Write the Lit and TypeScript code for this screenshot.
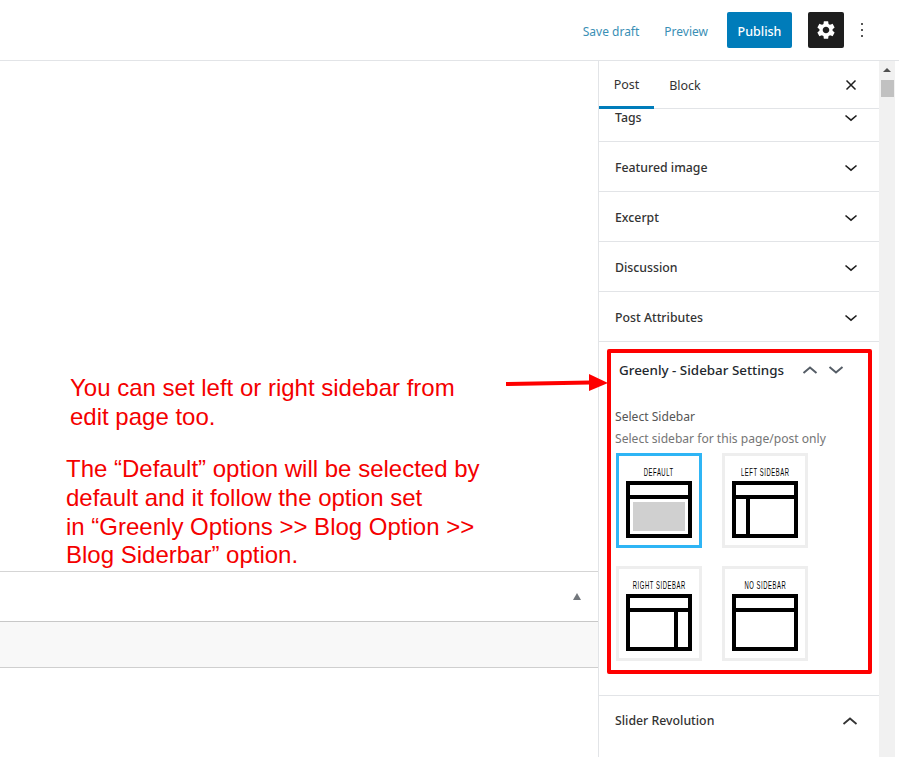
import { LitElement, html, css, svg } from "lit";
import { customElement } from "lit/decorators.js";

const chevronDown = html`<svg class="chev" viewBox="0 0 24 24" width="24" height="24"><path d="M6.5 9.5 12 14.2 17.5 9.5" fill="none" stroke="#1e1e1e" stroke-width="1.6"/></svg>`;
const chevronUp = html`<svg class="chev" viewBox="0 0 24 24" width="24" height="24"><path d="M5.5 15 12 9.5 18.5 15" fill="none" stroke="#333" stroke-width="1.8"/></svg>`;
const panelDown = html`<svg class="chev" viewBox="0 0 24 24" width="24" height="24"><path d="M5.5 9 12 14.5 18.5 9" fill="none" stroke="#555d66" stroke-width="2"/></svg>`;
const panelUp = html`<svg class="chev" viewBox="0 0 24 24" width="24" height="24"><path d="M5.5 15 12 9.5 18.5 15" fill="none" stroke="#555d66" stroke-width="2"/></svg>`;

const frame = (kind: string) => svg`
  <rect x="2" y="2" width="62" height="53" fill="none" stroke="#000" stroke-width="4"/>
  <path d="M0 16H66" stroke="#000" stroke-width="4"/>
  ${kind === "default" ? svg`<rect x="7" y="21" width="52" height="29" fill="#d0d0d0"/>` : ""}
  ${kind === "left" ? svg`<path d="M16 16V55" stroke="#000" stroke-width="4"/>` : ""}
  ${kind === "right" ? svg`<path d="M50 16V55" stroke="#000" stroke-width="4"/>` : ""}
`;

@customElement("app-root")
export class AppRoot extends LitElement {
  static styles = css`
    :host {
      display: block;
      position: relative;
      width: 899px;
      height: 757px;
      overflow: hidden;
      background: #fff;
      font-family: "Noto Sans", "Open Sans", sans-serif;
      font-size: 13px;
      color: #1e1e1e;
    }
    .top {
      height: 60px;
      border-bottom: 1px solid #e2e4e7;
      display: flex;
      align-items: center;
      justify-content: flex-end;
      padding-right: 35px;
    }
    .link { color: #3a8fb5; font-size: 12px; padding-top: 2px; }
    .save { margin-right: 25px; }
    .preview { margin-right: 19px; }
    .publish {
      width: 65px;
      height: 36px;
      background: #007cba;
      color: #fff;
      border-radius: 2px;
      display: flex;
      align-items: center;
      justify-content: center;
      font-weight: 500;
      font-size: 12.5px;
      margin-right: 16px;
      padding-top: 2px;
      box-sizing: border-box;
    }
    .gear {
      width: 36px;
      height: 36px;
      background: #1e1e1e;
      border-radius: 2px;
      display: flex;
      align-items: center;
      justify-content: center;
      margin-right: 16px;
    }
    .dots { width: 4px; display: flex; flex-direction: column; gap: 3.5px; align-items: center; }
    .dots i { width: 2.5px; height: 2.5px; background: #1e1e1e; border-radius: 50%; display: block; }
    .body {
      display: grid;
      grid-template-columns: 598px 281px 16px 4px;
      height: 696px;
    }
    .main { display: flex; flex-direction: column; }
    .editor { height: 510px; border-bottom: 1px solid #d5d5d5; }
    .meta {
      height: 49px;
      border-bottom: 1px solid #c8c8c8;
      display: flex;
      align-items: center;
      justify-content: flex-end;
      padding-right: 17px;
    }
    .tri { width: 0; height: 0; border-left: 4.5px solid transparent; border-right: 4.5px solid transparent; border-bottom: 7px solid #72777c; }
    .strip { height: 45px; background: #f8f8f8; border-bottom: 1px solid #cfcfcf; }
    .side { border-left: 1px solid #e2e4e7; display: flex; flex-direction: column; overflow: hidden; }
    .tabs {
      height: 47px;
      border-bottom: 1px solid #e2e4e7;
      display: flex;
      align-items: stretch;
      position: relative;
      flex: none;
    }
    .tab { display: flex; align-items: center; justify-content: center; font-size: 12.5px; color: #333; padding-top: 2px; box-sizing: border-box; }
    .tab.post { width: 55px; border-bottom: 3px solid #007cba; margin-bottom: -1px; }
    .tab.block { width: 62px; }
    .close { margin-left: auto; margin-right: 22px; display: flex; align-items: center; padding-top: 1px; }
    .row {
      height: 49px;
      flex: none;
      box-sizing: content-box;
      border-bottom: 1px solid #e2e4e7;
      display: flex;
      align-items: center;
      justify-content: space-between;
      padding: 0 20px 0 16px;
      font-weight: 500;
      font-size: 12.3px;
      color: #333;
    }
    .row > * { position: relative; top: 1px; }
    .row.tags { height: 32px; align-items: flex-start; line-height: 18px; }
    .row.tags > * { top: 0; }
    .row.tags .chev { margin-top: -3px; }
    .row.last { border-bottom: 0; padding-right: 21px; }
    .row.last > * { top: 0; }
    .chev { flex: none; margin-right: -4px; }
    .panel {
      height: 354px;
      flex: none;
      border-bottom: 1px solid #e2e4e7;
      padding: 19px 0 0 16px;
      box-sizing: border-box;
    }
    .panel-head {
      display: flex;
      align-items: center;
      height: 18px;
      padding-left: 4px;
      font-weight: 500;
      font-size: 13.4px;
      color: #23282d;
    }
    .panel-head .arrows { display: flex; margin-left: 14px; gap: 2px; }
    .panel-head .chev { margin-right: 0; }
    .field { margin-top: 27px; font-size: 12.1px; color: #555; line-height: 22px; }
    .hint { color: #757575; }
    .thumbs {
      display: grid;
      grid-template-columns: 86px 86px;
      grid-auto-rows: 95px;
      column-gap: 20px;
      row-gap: 18px;
      margin: 3px 0 0 1px;
    }
    .thumb {
      border: 3px solid #eeeeee;
      display: flex;
      flex-direction: column;
      align-items: center;
      padding-top: 11px;
      box-sizing: border-box;
    }
    .thumb.on { border-color: #2fb5f5; }
    .thumb span {
      font-family: "Liberation Sans", Arial, sans-serif;
      font-weight: 400;
      font-size: 10.5px;
      line-height: 10px;
      height: 14px;
      letter-spacing: 1px;
      color: #000;
      white-space: nowrap;
      transform: scaleX(0.56);
    }
    .scrollbar { background: #f1f1f1; display: flex; flex-direction: column; align-items: center; }
    .scrollbar .up {
      width: 0; height: 0; margin-top: 7px;
      border-left: 4px solid transparent; border-right: 4px solid transparent; border-bottom: 4px solid #505050;
    }
    .scrollbar .thumbbar { width: 13px; height: 17px; background: #c1c1c1; margin-top: 8px; }
    .redbox {
      position: absolute;
      left: 607px;
      top: 349px;
      width: 265px;
      height: 325px;
      box-sizing: border-box;
      border: 4px solid #fe0000;
      border-radius: 2px;
    }
    .arrow { position: absolute; left: 506px; top: 373px; }
    .note {
      position: absolute;
      color: #f40000;
      font-family: "Liberation Sans", Arial, sans-serif;
      font-size: 24px;
      line-height: 29px;
      white-space: nowrap;
    }
    .note.a { left: 70px; top: 373px; }
    .note.b { left: 66px; top: 455px; line-height: 28.8px; }
  `;

  private row(label: string) {
    return html`<div class="row"><span>${label}</span>${chevronDown}</div>`;
  }

  private thumb(label: string, kind: string) {
    return html`<div class="thumb ${kind === "default" ? "on" : ""}">
      <span>${label}</span>
      <svg width="66" height="57" viewBox="0 0 66 57">${frame(kind)}</svg>
    </div>`;
  }

  render() {
    return html`
      <div class="top">
        <span class="link save">Save draft</span>
        <span class="link preview">Preview</span>
        <div class="publish">Publish</div>
        <div class="gear">
          <svg width="22" height="22" viewBox="0 0 24 24"><path fill="#fff" d="M19.14 12.94c.04-.3.06-.61.06-.94 0-.32-.02-.64-.07-.94l2.03-1.58c.18-.14.23-.41.12-.61l-1.92-3.32c-.12-.22-.37-.29-.59-.22l-2.39.96c-.5-.38-1.03-.7-1.62-.94l-.36-2.54c-.04-.24-.24-.41-.48-.41h-3.84c-.24 0-.43.17-.47.41l-.36 2.54c-.59.24-1.13.57-1.62.94l-2.39-.96c-.22-.08-.47 0-.59.22L2.74 8.87c-.12.21-.08.47.12.61l2.03 1.58c-.05.3-.09.63-.09.94s.02.64.07.94l-2.03 1.58c-.18.14-.23.41-.12.61l1.92 3.32c.12.22.37.29.59.22l2.39-.96c.5.38 1.03.7 1.62.94l.36 2.54c.05.24.24.41.48.41h3.84c.24 0 .44-.17.47-.41l.36-2.54c.59-.24 1.13-.56 1.62-.94l2.39.96c.22.08.47 0 .59-.22l1.92-3.32c.12-.22.07-.47-.12-.61l-2.01-1.58zM12 15.6c-1.98 0-3.6-1.62-3.6-3.6s1.62-3.6 3.6-3.6 3.6 1.62 3.6 3.6-1.62 3.6-3.6 3.6z"/></svg>
        </div>
        <div class="dots"><i></i><i></i><i></i></div>
      </div>
      <div class="body">
        <div class="main">
          <div class="editor"></div>
          <div class="meta"><div class="tri"></div></div>
          <div class="strip"></div>
        </div>
        <div class="side">
          <div class="tabs">
            <div class="tab post">Post</div>
            <div class="tab block">Block</div>
            <div class="close">
              <svg width="12" height="12" viewBox="0 0 12 12"><path d="M1.5 1.5l9 9M10.5 1.5l-9 9" stroke="#1e1e1e" stroke-width="1.5" fill="none"/></svg>
            </div>
          </div>
          <div class="row tags"><span>Tags</span>${chevronDown}</div>
          ${this.row("Featured image")}
          ${this.row("Excerpt")}
          ${this.row("Discussion")}
          ${this.row("Post Attributes")}
          <div class="panel">
            <div class="panel-head">
              <span>Greenly - Sidebar Settings</span>
              <span class="arrows">${panelUp}${panelDown}</span>
            </div>
            <div class="field">
              <div>Select Sidebar</div>
              <div class="hint">Select sidebar for this page/post only</div>
            </div>
            <div class="thumbs">
              ${this.thumb("DEFAULT", "default")}
              ${this.thumb("LEFT SIDEBAR", "left")}
              ${this.thumb("RIGHT SIDEBAR", "right")}
              ${this.thumb("NO SIDEBAR", "none")}
            </div>
          </div>
          <div class="row last"><span>Slider Revolution</span>${chevronUp}</div>
        </div>
        <div class="scrollbar"><div class="up"></div><div class="thumbbar"></div></div>
        <div></div>
      </div>
      <div class="redbox"></div>
      <svg class="arrow" width="104" height="20" viewBox="0 0 104 20">
        <path d="M0 11L84 9.5" stroke="#fe0000" stroke-width="4" fill="none"/>
        <path d="M83 1l19 9-19 8z" fill="#fe0000"/>
      </svg>
      <div class="note a">You can set left or right sidebar from<br />edit page too.</div>
      <div class="note b">The “Default” option will be selected by<br />default and it follow the option set<br />in “Greenly Options &gt;&gt; Blog Option &gt;&gt;<br />Blog Siderbar” option.</div>
    `;
  }
}
